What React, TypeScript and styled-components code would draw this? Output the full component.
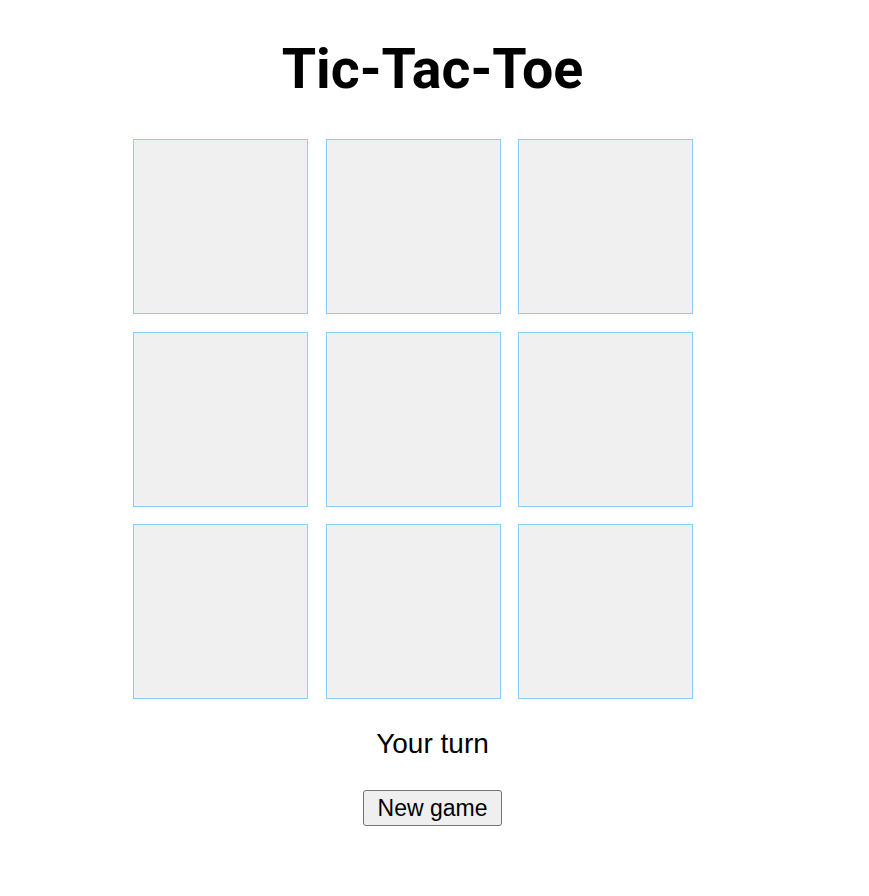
import React, { useState } from 'react';
import styled, { createGlobalStyle } from 'styled-components';

const GlobalStyle = createGlobalStyle`
  body {
    margin: 0;
    background: #fff;
    font-family: 'Liberation Sans', Arial, sans-serif;
  }
`;

const Page = styled.div`
  display: flex;
  flex-direction: column;
  align-items: center;
  padding: 30px 4px 0 0;
`;

const Title = styled.h1`
  margin: 0;
  font-family: Roboto, 'Liberation Sans', sans-serif;
  font-size: 55.5px;
  font-weight: 700;
  line-height: 80px;
  color: #000;
`;

const Board = styled.div`
  display: grid;
  grid-template-columns: repeat(3, 175px);
  grid-auto-rows: 175px;
  gap: 17.5px;
  margin-top: 29px;
  margin-right: 39px;
`;

const Cell = styled.button`
  box-sizing: border-box;
  width: 175px;
  height: 175px;
  padding: 0;
  background: #f0f0f0;
  border: 1px solid #87cefa;
  border-radius: 0;
  font-family: Roboto, sans-serif;
  font-size: 96px;
  font-weight: 700;
  cursor: pointer;
`;

const Status = styled.p`
  margin: 28px 0 0;
  font-size: 28px;
  line-height: 34px;
  color: #000;
`;

const NewGameButton = styled.button`
  box-sizing: border-box;
  margin-top: 29px;
  height: 36px;
  padding: 0 14px;
  font-family: 'Liberation Sans', Arial, sans-serif;
  font-size: 23px;
  color: #000;
  background: #efefef;
  border: 1px solid #767676;
  border-radius: 3px;
  cursor: pointer;
`;

export default function App() {
  const [cells, setCells] = useState<string[]>(Array(9).fill(''));

  return (
    <>
      <GlobalStyle />
      <Page>
        <Title>Tic-Tac-Toe</Title>
        <Board>
          {cells.map((value, index) => (
            <Cell
              key={index}
              onClick={() =>
                setCells((prev) => prev.map((v, i) => (i === index && !v ? 'X' : v)))
              }
            >
              {value}
            </Cell>
          ))}
        </Board>
        <Status>Your turn</Status>
        <NewGameButton onClick={() => setCells(Array(9).fill(''))}>New game</NewGameButton>
      </Page>
    </>
  );
}
